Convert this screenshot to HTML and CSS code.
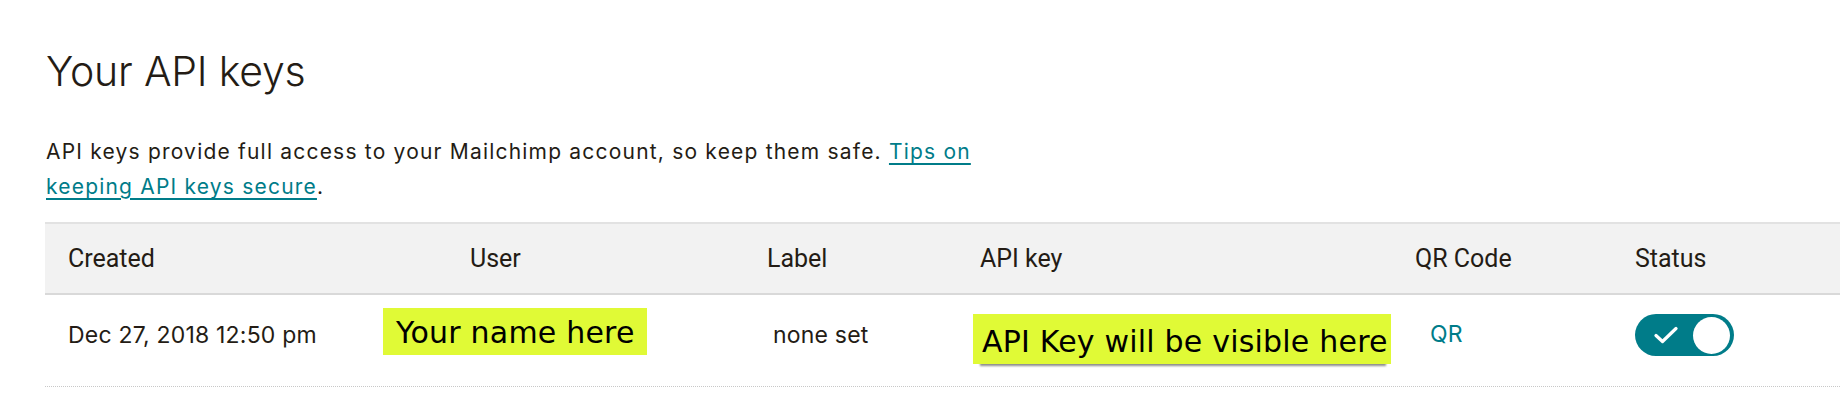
FILE: index.html
```html
<!DOCTYPE html>
<html lang="en">
<head>
<meta charset="utf-8">
<title>Your API keys</title>
<link rel="stylesheet" href="styles.css">
</head>
<body>
<main class="page">
  <h1 class="title">Your API keys</h1>
  <p class="intro">API keys provide full access to your Mailchimp account, so keep them safe. <a href="#" class="link">Tips on keeping API keys secure</a>.</p>
  <section class="keys">
    <div class="row head">
      <div class="cell c-created">Created</div>
      <div class="cell c-user">User</div>
      <div class="cell c-label">Label</div>
      <div class="cell c-key">API key</div>
      <div class="cell c-qr">QR Code</div>
      <div class="cell c-status">Status</div>
    </div>
    <div class="row body">
      <div class="cell c-created date">Dec 27, 2018 12:50 pm</div>
      <div class="cell c-user"><span class="mark mark-user">Your name here</span></div>
      <div class="cell c-label none">none set</div>
      <div class="cell c-key"><span class="mark mark-key">API Key will be visible here</span></div>
      <div class="cell c-qr"><a href="#" class="link qr">QR</a></div>
      <div class="cell c-status">
        <span class="toggle" role="switch" aria-checked="true">
          <svg class="check" width="24" height="18" viewBox="0 0 24 18"><path d="M2 9.5 L8.5 15.5 L22 2.5" fill="none" stroke="#fff" stroke-width="3.2" stroke-linecap="round" stroke-linejoin="round"/></svg>
          <span class="knob"></span>
        </span>
      </div>
    </div>
  </section>
</main>
</body>
</html>
```
FILE: styles.css
```css
html, body {
  margin: 0;
  background: #fff;
}
body {
  width: 1840px;
  overflow: hidden;
  color: #241c15;
  font-family: Inter, "Liberation Sans", sans-serif;
}
.page {
  padding: 44px 0 0 45px;
}
.title {
  margin: 0;
  padding-left: 1px;
  font-size: 41px;
  font-weight: 300;
  line-height: 54px;
  letter-spacing: -0.2px;
}
.intro {
  width: 960px;
  margin: 36px 0 0 0;
  padding-left: 1px;
  font-size: 21px;
  line-height: 35px;
  font-weight: 400;
  letter-spacing: 1.2px;
}
.link {
  color: #007c89;
  text-decoration: underline;
  text-underline-offset: 4px;
  text-decoration-thickness: 2px;
}
.keys {
  margin-top: 18px;
}
.row {
  display: grid;
  grid-template-columns: 338px 384px 206px 442px 220px 1fr;
}
.head {
  height: 69px;
  align-items: center;
  background: #f2f2f2;
  border-top: 2px solid #e2e2e2;
  border-bottom: 2px solid #d9d9d9;
  font-family: Roboto, "Liberation Sans", sans-serif;
  font-size: 25px;
}
.body {
  height: 91px;
  align-items: start;
  border-bottom: 1px dotted #c8c8c8;
  font-size: 23px;
  letter-spacing: 0.2px;
}
.c-created {
  padding-left: 23px;
}
.head .c-user {
  padding-left: 87px;
}
.head .c-key {
  padding-left: 7px;
}
.date {
  padding-top: 26px;
}
.none {
  padding-top: 26px;
  padding-left: 6px;
}
.mark {
  display: inline-block;
  box-sizing: border-box;
  background: #e0fa36;
  color: #000;
  font-family: "DejaVu Sans", sans-serif;
  font-size: 30px;
  font-weight: 400;
  line-height: 1;
  letter-spacing: 0.2px;
  white-space: nowrap;
}
.mark-user {
  margin-top: 13px;
  padding: 10px 8px 7px 13px;
  width: 264px;
  height: 47px;
}
.mark-key {
  margin-top: 19px;
  padding: 13px 4px 7px 9px;
  width: 418px;
  height: 50px;
  box-shadow: 1px 8px 2px -6px rgba(0, 0, 0, 0.45);
}
.body .c-qr {
  padding-top: 25px;
}
.qr {
  margin-left: 15px;
  text-decoration: none;
}
.body .c-status {
  padding-top: 19px;
}
.toggle {
  display: flex;
  align-items: center;
  justify-content: space-between;
  box-sizing: border-box;
  width: 99px;
  height: 42px;
  padding: 0 4px 0 19px;
  border-radius: 21px;
  background: #007c89;
}
.check {
  display: block;
}
.knob {
  width: 37px;
  height: 37px;
  border-radius: 50%;
  background: #fff;
}
```
